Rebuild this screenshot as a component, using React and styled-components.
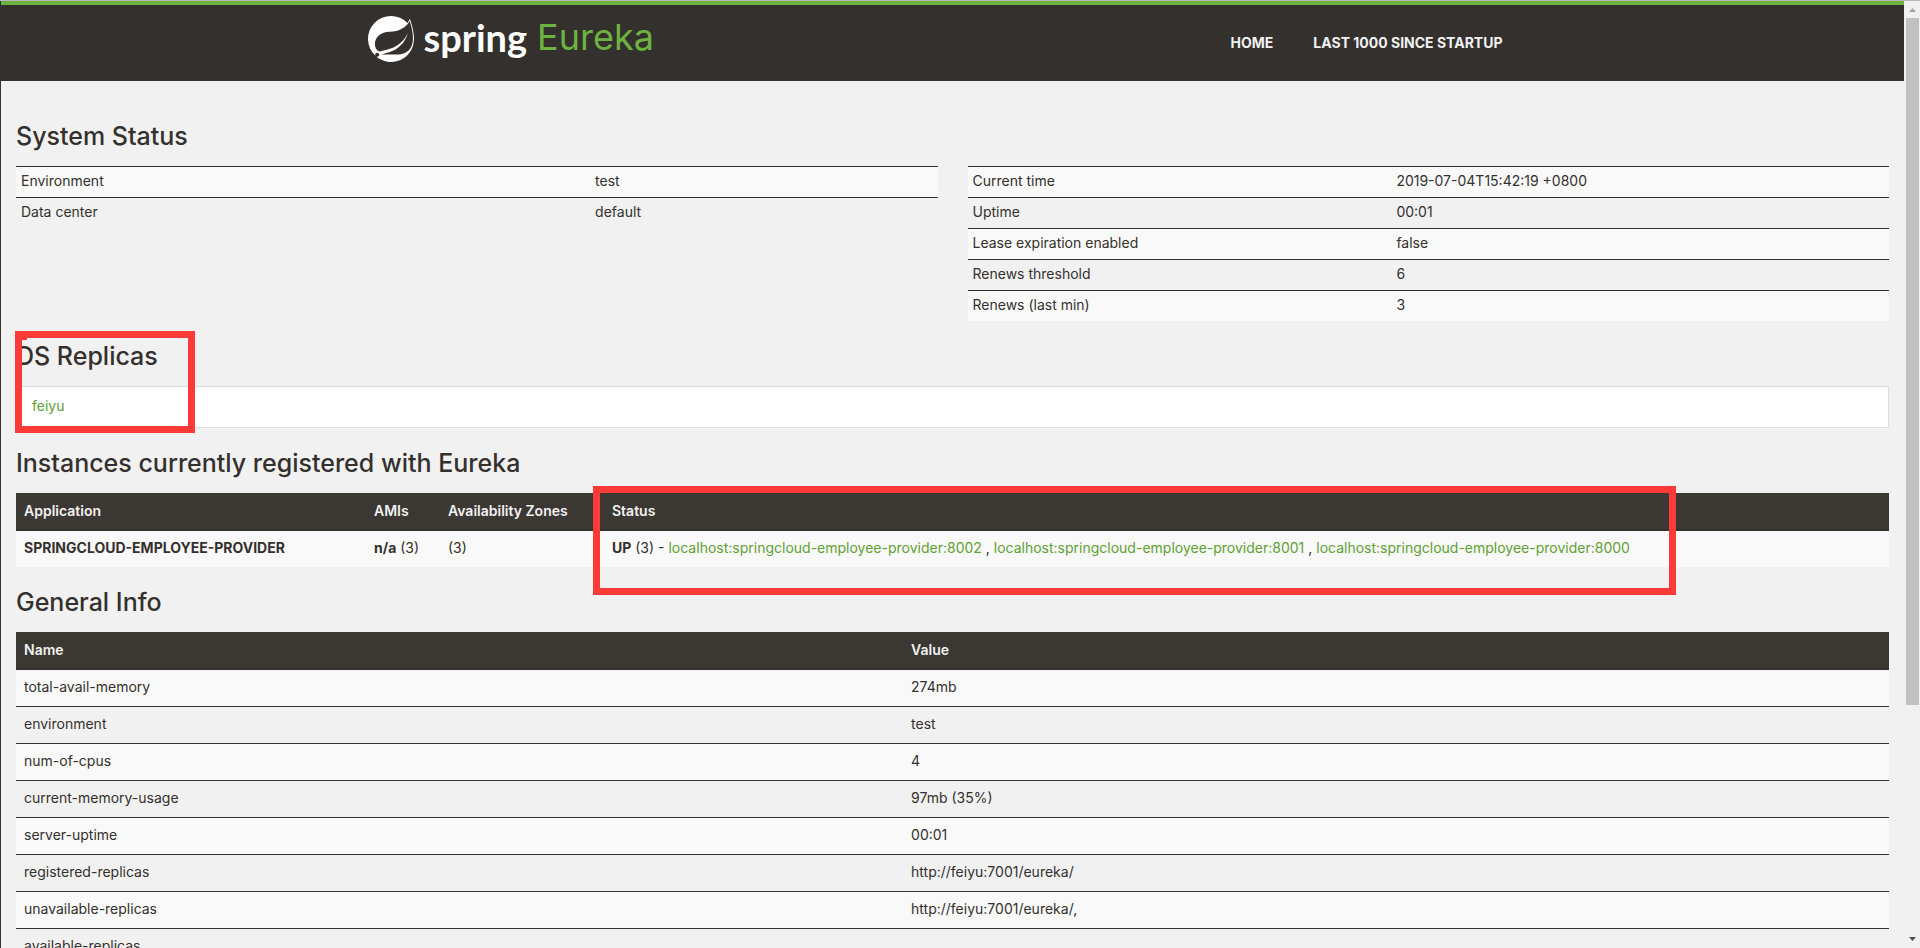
import React from "react";
import styled, { createGlobalStyle } from "styled-components";

const ink = "#34302d";
const page = "#f1f1f1";
const link = "#5fa134";
const bodyFont = '"Inter", "Open Sans", sans-serif';

const GlobalStyle = createGlobalStyle`
  *, *::before, *::after { box-sizing: border-box; }
  body {
    margin: 0;
    background: ${page};
    color: ${ink};
    font: 14px/20px ${bodyFont};
  }
`;

const Shell = styled.div`
  display: flex;
  height: 100vh;
  overflow: hidden;
  border-top: 1px solid #b9b7b9;
`;

const Viewport = styled.div`
  flex: 1;
  min-width: 0;
  overflow: hidden;
  border-left: 1px solid #333;
`;

const Header = styled.header`
  height: 80px;
  border-top: 4px solid #6db33f;
  background: ${ink};
`;

const HeaderInner = styled.div`
  display: flex;
  justify-content: space-between;
  align-items: flex-start;
  max-width: 1170px;
  margin: 0 auto;
`;

const Brand = styled.a`
  display: flex;
  height: 68px;
  align-items: center;
  color: #fff;
  text-decoration: none;
`;

const BrandMark = styled.svg`
  width: 46px;
  height: 46px;
`;

const BrandName = styled.span`
  margin-left: 10px;
  padding-bottom: 4px;
  font: 700 38px/48px "Lato", sans-serif;
`;

const BrandProduct = styled.span`
  margin-left: 10px;
  padding-bottom: 4px;
  color: #6db33f;
  font: 400 36px/48px "Inter", sans-serif;
`;

const Nav = styled.nav`
  display: flex;
  height: 76px;
  align-items: center;
  padding-right: 15px;
`;

const NavLink = styled.a`
  padding: 0 20px;
  color: ${page};
  font: 700 14px/20px "Inter", sans-serif;
  text-decoration: none;
  text-transform: uppercase;
`;

const Main = styled.main`
  padding: 20px 15px 0;
`;

const Section = styled.section`
  position: relative;
`;

const Title = styled.h1`
  margin: 0;
  padding: 20px 0 15px;
  font: 500 25px/30px "Inter", sans-serif;
`;

const Columns = styled.div`
  display: grid;
  grid-template-columns: 1fr 1fr;
  gap: 30px;
  align-items: start;
`;

const Table = styled.table`
  width: 100%;
  table-layout: fixed;
  border-spacing: 0;

  th, td {
    text-align: left;
    white-space: nowrap;
  }
  th { padding: 8px; }
  td { padding: ${(p) => (p.$condensed ? "4px 5px 6px" : "7px 8px 9px")}; }
  tbody tr:nth-child(odd) { background: #f9f9f9; }
  tbody td { border-top: 1px solid ${ink}; }
  thead + tbody tr:first-child td { border-top: 0; }
`;

const HeadCell = styled.th`
  border-bottom: 2px solid ${ink};
  background: #3b3833;
  color: ${page};
  font-weight: 600;
`;

const Col = styled.col`
  width: ${(p) => p.$width};
`;

const TextLink = styled.a`
  color: ${link};
  text-decoration: none;
`;

const ReplicaList = styled.ul`
  margin: 0;
  padding: 0;
  list-style: none;
`;

const ReplicaItem = styled.li`
  padding: 9px 15px 11px;
  border: 1px solid #ddd;
  background: #fff;
`;

const Highlight = styled.div`
  position: absolute;
  border: 7px solid #fc3a38;
  pointer-events: none;
`;

const ReplicaHighlight = styled(Highlight)`
  top: 10px;
  left: -1px;
  width: 180px;
  height: 102px;

  &::before {
    content: "";
    position: absolute;
    top: 0;
    left: 0;
    width: 5px;
    height: 2px;
    background: #fc3a38;
  }
`;

const StatusHighlight = styled(Highlight)`
  top: 58px;
  left: 577px;
  width: 1083px;
  height: 109px;
`;

const ScrollTrack = styled.div`
  display: flex;
  flex-direction: column;
  width: 16px;
  padding-right: 1px;
  padding-left: 2px;
`;

const ScrollArrow = styled.svg`
  width: 13px;
  height: 17px;
  flex: none;
`;

const ScrollThumb = styled.div`
  height: 72.5%;
  margin-bottom: auto;
  background: #c1c1c1;
`;

const replicas = ["feiyu"];

const instances = [
  "localhost:springcloud-employee-provider:8002",
  "localhost:springcloud-employee-provider:8001",
  "localhost:springcloud-employee-provider:8000",
];

const environment = [
  ["Environment", "test"],
  ["Data center", "default"],
];

const status = [
  ["Current time", "2019-07-04T15:42:19 +0800"],
  ["Uptime", "00:01"],
  ["Lease expiration enabled", "false"],
  ["Renews threshold", "6"],
  ["Renews (last min)", "3"],
];

const generalInfo = [
  ["total-avail-memory", "274mb"],
  ["environment", "test"],
  ["num-of-cpus", "4"],
  ["current-memory-usage", "97mb (35%)"],
  ["server-uptime", "00:01"],
  ["registered-replicas", "http://feiyu:7001/eureka/"],
  ["unavailable-replicas", "http://feiyu:7001/eureka/,"],
  ["available-replicas", ""],
];

function PairTable({ rows, nameWidth, head, condensed }) {
  return (
    <Table $condensed={condensed}>
      <colgroup>
        <Col $width={nameWidth} />
        <Col />
      </colgroup>
      {head && (
        <thead>
          <tr>
            {head.map((label) => (
              <HeadCell key={label} scope="col">{label}</HeadCell>
            ))}
          </tr>
        </thead>
      )}
      <tbody>
        {rows.map(([name, value]) => (
          <tr key={name}>
            <td>{name}</td>
            <td>{value}</td>
          </tr>
        ))}
      </tbody>
    </Table>
  );
}

function SpringMark() {
  return (
    <BrandMark viewBox="0 0 24 24" fill="#fff" aria-hidden="true">
      <path d="M21.8537 1.4158a10.4504 10.4504 0 0 1-1.284 2.2471A11.9666 11.9666 0 1 0 3.8518 20.7757l.4445.3951a11.9543 11.9543 0 0 0 19.6316-8.2971c.3457-3.0126-.568-6.8649-2.0742-11.458zM5.5805 20.8745a1.0174 1.0174 0 1 1-.1482-1.4323 1.0396 1.0396 0 0 1 .1482 1.4323zm16.1991-3.5806c-2.9385 3.9263-9.2601 2.5928-13.2852 2.7904 0 0-.7161.0494-1.4323.1481 0 0 .2717-.1234.6174-.2469 2.8398-.9877 4.1732-1.1853 5.9018-2.0743 3.2349-1.6545 6.4698-5.2844 7.1118-9.0379-1.2347 3.6053-4.9881 6.7167-8.3959 7.9761-2.3459.8643-6.5685 1.7039-6.5685 1.7039l-.1729-.0988c-2.8645-1.4076-2.9632-7.6304 2.2718-9.6306 2.2966-.889 4.4696-.395 6.9637-.9877 2.6422-.6174 5.7043-2.5928 6.939-5.1857 1.3828 4.1732 3.062 10.643.0493 14.6434z" />
    </BrandMark>
  );
}

export default function App() {
  return (
    <>
      <GlobalStyle />
      <Shell>
        <Viewport>
          <Header>
            <HeaderInner>
              <Brand href="#">
                <SpringMark />
                <BrandName>spring</BrandName>
                <BrandProduct>Eureka</BrandProduct>
              </Brand>
              <Nav>
                <NavLink href="#">Home</NavLink>
                <NavLink href="#lastn">Last 1000 since startup</NavLink>
              </Nav>
            </HeaderInner>
          </Header>
          <Main>
            <Section>
              <Title>System Status</Title>
              <Columns>
                <PairTable condensed rows={environment} nameWidth="62.3%" />
                <PairTable condensed rows={status} nameWidth="46%" />
              </Columns>
            </Section>
            <Section>
              <Title>DS Replicas</Title>
              <ReplicaList>
                {replicas.map((name) => (
                  <ReplicaItem key={name}>
                    <TextLink href="#">{name}</TextLink>
                  </ReplicaItem>
                ))}
              </ReplicaList>
              <ReplicaHighlight />
            </Section>
            <Section>
              <Title>Instances currently registered with Eureka</Title>
              <Table>
                <colgroup>
                  <Col $width="350px" />
                  <Col $width="74px" />
                  <Col $width="164px" />
                  <Col />
                </colgroup>
                <thead>
                  <tr>
                    <HeadCell scope="col">Application</HeadCell>
                    <HeadCell scope="col">AMIs</HeadCell>
                    <HeadCell scope="col">Availability Zones</HeadCell>
                    <HeadCell scope="col">Status</HeadCell>
                  </tr>
                </thead>
                <tbody>
                  <tr>
                    <td><b>SPRINGCLOUD-EMPLOYEE-PROVIDER</b></td>
                    <td><b>n/a</b> (3)</td>
                    <td>(3)</td>
                    <td>
                      <b>UP</b> (3) -{" "}
                      {instances.map((name, i) => (
                        <React.Fragment key={name}>
                          {i > 0 && " , "}
                          <TextLink href="#">{name}</TextLink>
                        </React.Fragment>
                      ))}
                    </td>
                  </tr>
                </tbody>
              </Table>
              <StatusHighlight />
            </Section>
            <Section>
              <Title>General Info</Title>
              <PairTable rows={generalInfo} nameWidth="47.36%" head={["Name", "Value"]} />
            </Section>
          </Main>
        </Viewport>
        <ScrollTrack aria-hidden="true">
          <ScrollArrow viewBox="0 0 13 17">
            <path d="M3 11h7L6.500 7z" fill="#a3a3a3" />
          </ScrollArrow>
          <ScrollThumb />
          <ScrollArrow viewBox="0 0 13 17">
            <path d="M3 6h7L6.500 10z" fill="#505050" />
          </ScrollArrow>
        </ScrollTrack>
      </Shell>
    </>
  );
}
